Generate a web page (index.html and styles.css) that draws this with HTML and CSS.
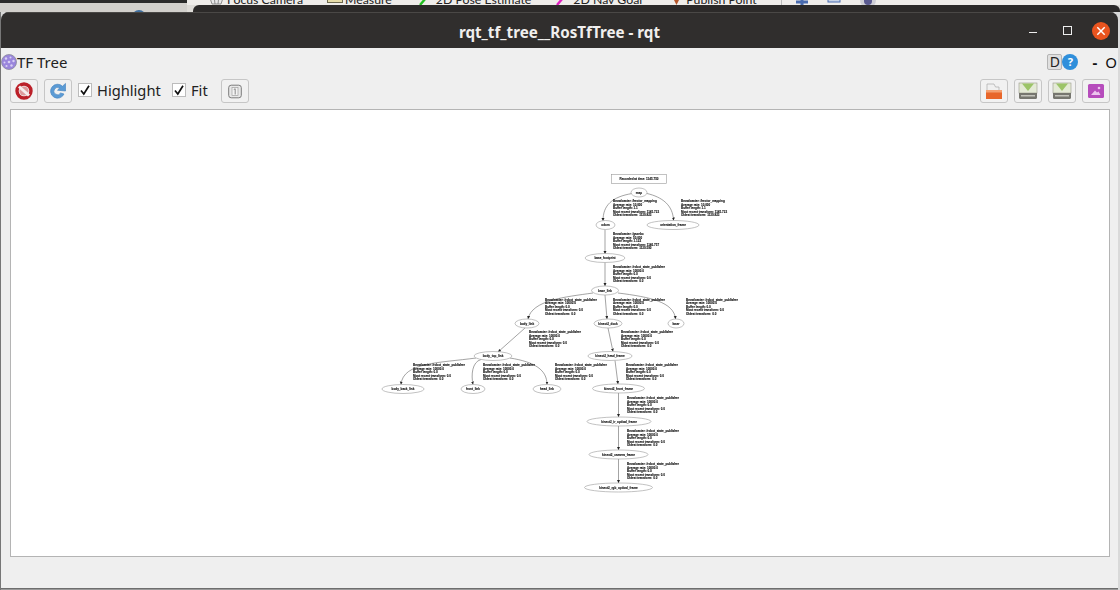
FILE: index.html
```html
<!DOCTYPE html>
<html lang="en">
<head>
    <meta charset="utf-8"/>
    <title>rqt_tf_tree__RosTfTree - rqt</title>
    <link rel="stylesheet" href="styles.css">
</head>
<body>

<!-- what shows of the desktop above the window -->
<div class="desktop_strip">
    <div class="desktop_strip__left">
        <div class="desktop_strip__dot"></div>
    </div>
    <div class="desktop_strip__right">
        <div class="rviz_tools">
            <div class="rviz_tool rviz_tool--camera">
                <svg width="17" height="14" viewBox="0 0 17 14"><path d="M1 3 H16 L13 12 H4 Z M6 3 L7 12 M11 3 L10 12 M2 7 H15" fill="#e8e8e8" stroke="#777" stroke-width="0.8"/></svg>
                <span>Focus Camera</span>
            </div>
            <div class="rviz_tool rviz_tool--measure">
                <svg width="16" height="14" viewBox="0 0 16 14"><rect x="0.5" y="3" width="15" height="7.5" fill="#e6dca8" stroke="#6e6a50"/></svg>
                <span>Measure</span>
            </div>
            <div class="rviz_tool rviz_tool--pose">
                <svg width="15" height="14" viewBox="0 0 15 14"><path d="M1 13 L12 0" stroke="#22c020" stroke-width="2.4"/></svg>
                <span>2D Pose Estimate</span>
            </div>
            <div class="rviz_tool rviz_tool--nav">
                <svg width="15" height="14" viewBox="0 0 15 14"><path d="M1 13 L12 0" stroke="#e020c0" stroke-width="2.4"/></svg>
                <span>2D Nav Goal</span>
            </div>
            <div class="rviz_tool rviz_tool--point">
                <svg width="14" height="14" viewBox="0 0 14 14"><path d="M2 4 H11 L6.5 13 Z" fill="#b5562a"/></svg>
                <span>Publish Point</span>
            </div>
            <div class="rviz_tools__sep"></div>
            <svg class="rviz_icon rviz_icon--first" width="16" height="14" viewBox="0 0 16 14"><path d="M8 0 V8 M2 2 H14" stroke="#4a6cb0" stroke-width="3"/></svg>
            <svg class="rviz_icon" width="16" height="14" viewBox="0 0 16 14"><rect x="1" y="-4" width="12" height="6" fill="#c8d4e8" stroke="#4a6cb0"/></svg>
            <svg class="rviz_icon" width="16" height="14" viewBox="0 0 16 14"><circle cx="8" cy="0" r="8" fill="#cfcfd6"/><circle cx="8" cy="1" r="4" fill="#5a5a90"/></svg>
        </div>
        <div class="behind_window"></div>
    </div>
</div>

<div class="window">
    <div class="titlebar">
        <div class="titlebar__title">rqt_tf_tree__RosTfTree - rqt</div>
        <div class="titlebar__controls">
            <div class="win_min"></div>
            <div class="win_max"></div>
            <div class="win_close">
                <svg width="18" height="18" viewBox="0 0 18 18"><path d="M5.3 5.3 L12.7 12.7 M12.7 5.3 L5.3 12.7" stroke="#fff" stroke-width="1.5"/></svg>
            </div>
        </div>
    </div>

    <div class="plugin">
        <div class="plugin_head">
            <svg class="plugin_head__logo" width="16" height="16" viewBox="0 0 16 16">
                <circle cx="8" cy="8" r="7.5" fill="#9a86dc" stroke="#8a8a9a" stroke-width="0.8"/>
                <g fill="#d8d0f4">
                    <circle cx="5" cy="4.5" r="1.2"/><circle cx="9.5" cy="3.5" r="1"/><circle cx="12.5" cy="7" r="1.2"/>
                    <circle cx="3.5" cy="8.5" r="1"/><circle cx="8" cy="8" r="1.3"/><circle cx="5.5" cy="12" r="1.1"/>
                    <circle cx="10.5" cy="11.5" r="1.2"/>
                </g>
            </svg>
            <span class="plugin_head__name">TF Tree</span>
            <div class="plugin_head__right">
                <div class="d_box">D</div>
                <div class="help_dot">?</div>
                <span class="plugin_head__dash">-</span>
                <span class="plugin_head__o">O</span>
            </div>
        </div>

        <div class="controls">
            <button class="tool_button">
                <svg width="18" height="18" viewBox="0 0 18 18">
                    <circle cx="9" cy="9" r="7" fill="none" stroke="#bb2029" stroke-width="3.4"/>
                    <circle cx="9" cy="9" r="4.6" fill="#dd9a9c"/>
                    <path d="M4 4.5 L14 13.5" stroke="#f6eeee" stroke-width="3"/>
                </svg>
            </button>
            <button class="tool_button">
                <svg width="20" height="20" viewBox="0 0 20 20">
                    <path d="M14.5 5.2 A7 7 0 1 0 16 13 L12.6 12 A3.6 3.6 0 1 1 11.6 7.2 L9.5 9.2 L17.5 10 L17.5 2.4 Z" fill="#5b9bd5" stroke="#3f7fbd" stroke-width="0.6"/>
                </svg>
            </button>
            <label class="check check--highlight"><span class="check__box"><svg width="12" height="12" viewBox="0 0 12 12"><path d="M2 6.5 L4.8 10 L10 1.8" fill="none" stroke="#111" stroke-width="1.7"/></svg></span>Highlight</label>
            <label class="check check--fit"><span class="check__box"><svg width="12" height="12" viewBox="0 0 12 12"><path d="M2 6.5 L4.8 10 L10 1.8" fill="none" stroke="#111" stroke-width="1.7"/></svg></span>Fit</label>
            <button class="tool_button">
                <svg width="14" height="15" viewBox="0 0 14 15">
                    <rect x="0.7" y="1.2" width="12.6" height="12.6" rx="2.5" fill="#e8e8e8" stroke="#7c7c7c" stroke-width="1"/>
                    <rect x="4" y="3.5" width="6" height="8" fill="#f4f4f4" stroke="#a0a0a0" stroke-width="0.7"/>
                    <path d="M5.8 5.5 L7.2 4.8 V10.5" fill="none" stroke="#888" stroke-width="1"/>
                </svg>
            </button>

            <div class="controls__right">
                <button class="tool_button">
                    <svg width="20" height="18" viewBox="0 0 20 18">
                        <path d="M3 15 V2 H10 L11.5 5 H15 V15 Z" fill="#f0f0f0" stroke="#aaa" stroke-width="0.7"/>
                        <path d="M2 8 H18 V17 H2 Z" fill="#e8662a"/>
                        <path d="M2 8 H18 V10.5 H2 Z" fill="#f4a070"/>
                    </svg>
                </button>
                <button class="tool_button">
                    <svg width="20" height="18" viewBox="0 0 20 18">
                        <rect x="1" y="1" width="18" height="10" fill="#e4ead6" stroke="#9a9a8a" stroke-width="0.6"/>
                        <path d="M4 1.5 H16 L10 9 Z" fill="#9cc468"/>
                        <path d="M1 11 H19 V16 A1.5 1.5 0 0 1 17.5 17 H2.5 A1.5 1.5 0 0 1 1 16 Z" fill="#76766f"/>
                        <rect x="3" y="13" width="14" height="1.5" fill="#c4c4bc"/>
                    </svg>
                </button>
                <button class="tool_button">
                    <svg width="20" height="18" viewBox="0 0 20 18">
                        <rect x="1" y="1" width="18" height="10" fill="#e4ead6" stroke="#9a9a8a" stroke-width="0.6"/>
                        <path d="M4 1.5 H16 L10 9 Z" fill="#9cc468"/>
                        <path d="M1 11 H19 V16 A1.5 1.5 0 0 1 17.5 17 H2.5 A1.5 1.5 0 0 1 1 16 Z" fill="#76766f"/>
                        <rect x="3" y="13" width="14" height="1.5" fill="#c4c4bc"/>
                    </svg>
                </button>
                <button class="tool_button">
                    <svg width="18" height="18" viewBox="0 0 18 18">
                        <rect x="1" y="2" width="16" height="14" rx="1.5" fill="#b64cbc"/>
                        <path d="M4 13 L8 8.5 L10 10.5 L11.5 9.5 L13.5 13 Z" fill="#ecc4ee"/>
                        <circle cx="12" cy="6" r="1.3" fill="#ecc4ee"/>
                    </svg>
                </button>
            </div>
        </div>

        <div class="graph_view">
            <!-- viewBox keeps the graph in window coordinates -->
            <svg class="graph" width="1098" height="446" viewBox="11 110 1098 446">
                <defs>
                    <marker id="arrow" markerWidth="4" markerHeight="4" refX="3" refY="1.5" orient="auto" markerUnits="userSpaceOnUse">
                        <path d="M0 0 L3 1.5 L0 3 Z" fill="#222"/>
                    </marker>
                </defs>

                <g class="edges">
                    <path marker-end="url(#arrow)" d="M632 193.5 C612 197 603 205 603 221"/>
                    <path marker-end="url(#arrow)" d="M647 193.5 C662 197 673 205 673.5 220.5"/>
                    <path marker-end="url(#arrow)" d="M605 229.5 L605 254"/>
                    <path marker-end="url(#arrow)" d="M605 262.5 L605 286"/>
                    <path marker-end="url(#arrow)" d="M593 293 C565 297 532 300 528 319"/>
                    <path marker-end="url(#arrow)" d="M605 295 L607 319"/>
                    <path marker-end="url(#arrow)" d="M618 293 C650 297 674 302 675.5 319"/>
                    <path marker-end="url(#arrow)" d="M525 328 L498 352"/>
                    <path marker-end="url(#arrow)" d="M608 328 L613 351.5"/>
                    <path marker-end="url(#arrow)" d="M615 360.5 L618 384"/>
                    <path marker-end="url(#arrow)" d="M476 358 C440 363 403 362 401 384.5"/>
                    <path marker-end="url(#arrow)" d="M481 359.5 C472 362 471 375 473 384.5"/>
                    <path marker-end="url(#arrow)" d="M510 358 C535 362 547 370 547 384.5"/>
                    <path marker-end="url(#arrow)" d="M618.5 393 L618.5 417"/>
                    <path marker-end="url(#arrow)" d="M618.5 426 L618.5 450"/>
                    <path marker-end="url(#arrow)" d="M618.5 459 L618.5 483"/>
                </g>

                <rect class="stamp" x="611.5" y="174.5" width="55" height="9"/>
                <text class="node_label" x="639" y="179.6">Recorded at time: 1145.750</text>

                <g class="nodes">
                    <ellipse cx="639" cy="192.5" rx="8" ry="4.5"/>
                    <ellipse cx="605.5" cy="225" rx="9.5" ry="4.5"/>
                    <ellipse cx="673" cy="225" rx="26" ry="4.5"/>
                    <ellipse cx="605" cy="258" rx="20" ry="4.5"/>
                    <ellipse cx="605" cy="290.5" rx="13.5" ry="4.5"/>
                    <ellipse cx="527" cy="323.5" rx="12" ry="4.5"/>
                    <ellipse cx="608" cy="323.5" rx="14" ry="4.5"/>
                    <ellipse cx="676" cy="323.5" rx="8" ry="4.5"/>
                    <ellipse cx="493" cy="356" rx="19" ry="4.5"/>
                    <ellipse cx="610" cy="356" rx="22" ry="4.5"/>
                    <ellipse cx="403" cy="389" rx="21" ry="4.5"/>
                    <ellipse cx="473" cy="389" rx="12" ry="4.5"/>
                    <ellipse cx="547" cy="389" rx="14" ry="4.5"/>
                    <ellipse cx="618.5" cy="388.5" rx="26" ry="4.5"/>
                    <ellipse cx="619" cy="421.5" rx="32" ry="4.5"/>
                    <ellipse cx="618.5" cy="454.5" rx="29.5" ry="4.5"/>
                    <ellipse cx="618.5" cy="487.5" rx="34" ry="4.5"/>
                </g>

                <g class="node_names">
                    <text class="node_label" x="639" y="193.6">map</text>
                    <text class="node_label" x="605.5" y="226.1">odom</text>
                    <text class="node_label" x="673" y="226.1">orientation_frame</text>
                    <text class="node_label" x="605" y="259.1">base_footprint</text>
                    <text class="node_label" x="605" y="291.6">base_link</text>
                    <text class="node_label" x="527" y="324.6">body_link</text>
                    <text class="node_label" x="608" y="324.6">kinect2_dock</text>
                    <text class="node_label" x="676" y="324.6">laser</text>
                    <text class="node_label" x="493" y="357.1">body_top_link</text>
                    <text class="node_label" x="610" y="357.1">kinect2_head_frame</text>
                    <text class="node_label" x="403" y="390.1">body_back_link</text>
                    <text class="node_label" x="473" y="390.1">front_link</text>
                    <text class="node_label" x="547" y="390.1">head_link</text>
                    <text class="node_label" x="618.5" y="389.6">kinect2_front_frame</text>
                    <text class="node_label" x="619" y="422.6">kinect2_ir_optical_frame</text>
                    <text class="node_label" x="618.5" y="455.6">kinect2_camera_frame</text>
                    <text class="node_label" x="618.5" y="488.6">kinect2_rgb_optical_frame</text>
                </g>

                <g class="edge_labels">
                    <text y="202"><tspan x="613">Broadcaster: /hector_mapping</tspan><tspan x="613" dy="3.6">Average rate: 10.000</tspan><tspan x="613" dy="3.6">Buffer length: 1.1</tspan><tspan x="613" dy="3.6">Most recent transform: 1145.723</tspan><tspan x="613" dy="3.6">Oldest transform: 1139.823</tspan></text>
                    <text y="202"><tspan x="681">Broadcaster: /hector_mapping</tspan><tspan x="681" dy="3.6">Average rate: 10.000</tspan><tspan x="681" dy="3.6">Buffer length: 1.1</tspan><tspan x="681" dy="3.6">Most recent transform: 1145.723</tspan><tspan x="681" dy="3.6">Oldest transform: 1139.823</tspan></text>
                    <text y="235"><tspan x="613">Broadcaster: /gazebo</tspan><tspan x="613" dy="3.6">Average rate: 50.000</tspan><tspan x="613" dy="3.6">Buffer length: 1.122</tspan><tspan x="613" dy="3.6">Most recent transform: 1146.757</tspan><tspan x="613" dy="3.6">Oldest transform: 1139.590</tspan></text>
                    <text y="268"><tspan x="613">Broadcaster: /robot_state_publisher</tspan><tspan x="613" dy="3.6">Average rate: 10000.0</tspan><tspan x="613" dy="3.6">Buffer length: 0.0</tspan><tspan x="613" dy="3.6">Most recent transform: 0.0</tspan><tspan x="613" dy="3.6">Oldest transform: 0.0</tspan></text>
                    <text y="300.5"><tspan x="545">Broadcaster: /robot_state_publisher</tspan><tspan x="545" dy="3.6">Average rate: 10000.0</tspan><tspan x="545" dy="3.6">Buffer length: 0.0</tspan><tspan x="545" dy="3.6">Most recent transform: 0.0</tspan><tspan x="545" dy="3.6">Oldest transform: 0.0</tspan></text>
                    <text y="300.5"><tspan x="613">Broadcaster: /robot_state_publisher</tspan><tspan x="613" dy="3.6">Average rate: 10000.0</tspan><tspan x="613" dy="3.6">Buffer length: 0.0</tspan><tspan x="613" dy="3.6">Most recent transform: 0.0</tspan><tspan x="613" dy="3.6">Oldest transform: 0.0</tspan></text>
                    <text y="300.5"><tspan x="686">Broadcaster: /robot_state_publisher</tspan><tspan x="686" dy="3.6">Average rate: 10000.0</tspan><tspan x="686" dy="3.6">Buffer length: 0.0</tspan><tspan x="686" dy="3.6">Most recent transform: 0.0</tspan><tspan x="686" dy="3.6">Oldest transform: 0.0</tspan></text>
                    <text y="333"><tspan x="529">Broadcaster: /robot_state_publisher</tspan><tspan x="529" dy="3.6">Average rate: 10000.0</tspan><tspan x="529" dy="3.6">Buffer length: 0.0</tspan><tspan x="529" dy="3.6">Most recent transform: 0.0</tspan><tspan x="529" dy="3.6">Oldest transform: 0.0</tspan></text>
                    <text y="333"><tspan x="621">Broadcaster: /robot_state_publisher</tspan><tspan x="621" dy="3.6">Average rate: 10000.0</tspan><tspan x="621" dy="3.6">Buffer length: 0.0</tspan><tspan x="621" dy="3.6">Most recent transform: 0.0</tspan><tspan x="621" dy="3.6">Oldest transform: 0.0</tspan></text>
                    <text y="366"><tspan x="413">Broadcaster: /robot_state_publisher</tspan><tspan x="413" dy="3.6">Average rate: 10000.0</tspan><tspan x="413" dy="3.6">Buffer length: 0.0</tspan><tspan x="413" dy="3.6">Most recent transform: 0.0</tspan><tspan x="413" dy="3.6">Oldest transform: 0.0</tspan></text>
                    <text y="366"><tspan x="483">Broadcaster: /robot_state_publisher</tspan><tspan x="483" dy="3.6">Average rate: 10000.0</tspan><tspan x="483" dy="3.6">Buffer length: 0.0</tspan><tspan x="483" dy="3.6">Most recent transform: 0.0</tspan><tspan x="483" dy="3.6">Oldest transform: 0.0</tspan></text>
                    <text y="366"><tspan x="555">Broadcaster: /robot_state_publisher</tspan><tspan x="555" dy="3.6">Average rate: 10000.0</tspan><tspan x="555" dy="3.6">Buffer length: 0.0</tspan><tspan x="555" dy="3.6">Most recent transform: 0.0</tspan><tspan x="555" dy="3.6">Oldest transform: 0.0</tspan></text>
                    <text y="366"><tspan x="626">Broadcaster: /robot_state_publisher</tspan><tspan x="626" dy="3.6">Average rate: 10000.0</tspan><tspan x="626" dy="3.6">Buffer length: 0.0</tspan><tspan x="626" dy="3.6">Most recent transform: 0.0</tspan><tspan x="626" dy="3.6">Oldest transform: 0.0</tspan></text>
                    <text y="399"><tspan x="627">Broadcaster: /robot_state_publisher</tspan><tspan x="627" dy="3.6">Average rate: 10000.0</tspan><tspan x="627" dy="3.6">Buffer length: 0.0</tspan><tspan x="627" dy="3.6">Most recent transform: 0.0</tspan><tspan x="627" dy="3.6">Oldest transform: 0.0</tspan></text>
                    <text y="432"><tspan x="627">Broadcaster: /robot_state_publisher</tspan><tspan x="627" dy="3.6">Average rate: 10000.0</tspan><tspan x="627" dy="3.6">Buffer length: 0.0</tspan><tspan x="627" dy="3.6">Most recent transform: 0.0</tspan><tspan x="627" dy="3.6">Oldest transform: 0.0</tspan></text>
                    <text y="465"><tspan x="627">Broadcaster: /robot_state_publisher</tspan><tspan x="627" dy="3.6">Average rate: 10000.0</tspan><tspan x="627" dy="3.6">Buffer length: 0.0</tspan><tspan x="627" dy="3.6">Most recent transform: 0.0</tspan><tspan x="627" dy="3.6">Oldest transform: 0.0</tspan></text>
                </g>
            </svg>
        </div>

        <div class="status_area"></div>
    </div>
</div>

</body>
</html>
```

FILE: styles.css
```css
html {
    height: 100%;
}

body {
    margin: 0;
    width: 1120px;
    height: 590px;
    overflow: hidden;
    background: linear-gradient(to right, #777 0 1px, #d9d9d9 1px);
    font-family: "Noto Sans", "Open Sans", sans-serif;
    color: #2a2a2a;
}

/* desktop behind the window */
.desktop_strip {
    display: flex;
    height: 12px;
}

.desktop_strip__left {
    width: 187px;
    box-sizing: border-box;
    border-top: 3px solid #2b2b2b;
    padding-left: 132px;
    background-color: #d2d0cc;
    overflow: hidden;
}

.desktop_strip__dot {
    width: 14px;
    height: 14px;
    margin-top: 7px;
    border-radius: 50%;
    background-color: #3f6f9f;
}

.desktop_strip__right {
    flex: 1;
    display: flex;
    flex-direction: column;
    background-color: #dedcd8;
}

.rviz_tools {
    display: flex;
    align-items: flex-end;
    height: 5px;
    overflow: hidden;
    background-color: #efedea;
}

.rviz_tool {
    display: flex;
    align-items: flex-end;
    flex: none;
    gap: 2px;
    height: 14px;
    margin-bottom: -1px;
    font-family: "Lato", "Noto Sans", sans-serif;
    font-size: 12.3px;
    line-height: 14px;
    color: #222;
}

.rviz_tool span {
    margin-bottom: -1px;
}

.rviz_tool svg {
    flex: none;
}

.rviz_tool--camera { margin-left: 21px; }
.rviz_tool--measure { margin-left: 24px; }
.rviz_tool--pose { margin-left: 27px; }
.rviz_tool--nav { margin-left: 25px; }
.rviz_tool--point { margin-left: 28px; }

.rviz_tools__sep {
    flex: none;
    width: 1px;
    height: 5px;
    margin-left: 24px;
    background-color: #bbb;
}

.rviz_icon {
    flex: none;
    margin-left: 17px;
    align-self: flex-start;
}

.rviz_icon--first {
    margin-left: 12px;
}

.behind_window {
    flex: 1;
    margin-left: 6px;
    border-radius: 6px 6px 0 0;
    background-color: #2c2a29;
}

/* the rqt window */
.window {
    display: flex;
    flex-direction: column;
    height: 576px;
    margin: 0 2px 0 1px;
    border-radius: 8px 8px 0 0;
    overflow: hidden;
    box-shadow: 0 1px 0 #6e6e6e, 0 2px 0 #9a9a9a;
}

.titlebar {
    display: flex;
    flex: none;
    align-items: center;
    justify-content: center;
    position: relative;
    height: 36px;
    background-color: #302e2d;
    border-top: 1px solid #4a4846;
    box-sizing: border-box;
}

.titlebar__title {
    font-size: 15.2px;
    font-weight: 700;
    color: #f0efee;
    margin-left: 0;
    margin-top: 2px;
}

.titlebar__controls {
    display: flex;
    align-items: center;
    position: absolute;
    right: 0;
    top: 0;
    bottom: 0;
}

.win_min {
    width: 8px;
    height: 1.5px;
    margin-top: 4px;
    background-color: #eee;
}

.win_max {
    width: 7px;
    height: 7px;
    margin-left: 26px;
    border: 1px solid #eee;
}

.win_close {
    display: flex;
    width: 18px;
    height: 18px;
    margin-left: 20px;
    margin-right: 8px;
    border-radius: 50%;
    background-color: #e9541f;
}

.plugin {
    display: flex;
    flex: 1;
    flex-direction: column;
    background-color: #efefef;
}

.plugin_head {
    display: flex;
    flex: none;
    align-items: center;
    height: 31px;
    padding-bottom: 3px;
    box-sizing: border-box;
}

.plugin_head__logo {
    flex: none;
}

.plugin_head__name {
    font-size: 15px;
    color: #222;
}

.plugin_head__right {
    display: flex;
    align-items: center;
    margin-left: auto;
}

.d_box {
    width: 13px;
    height: 14px;
    border: 1px solid #b4b4b4;
    border-radius: 2px;
    background-color: #e0e0e0;
    font-size: 14px;
    line-height: 14px;
    text-align: center;
    color: #222;
}

.help_dot {
    width: 16px;
    height: 16px;
    border-radius: 50%;
    background-color: #2f8fdb;
    color: #fff;
    font-size: 11px;
    font-weight: 700;
    line-height: 16px;
    text-align: center;
}

.plugin_head__dash {
    margin-left: 14px;
    font-size: 15px;
    font-weight: 700;
    color: #111;
}

.plugin_head__o {
    margin-left: 8px;
    margin-right: 1px;
    font-size: 15px;
    color: #111;
}

.controls {
    display: flex;
    flex: none;
    align-items: center;
    height: 24px;
    padding: 0 8px 0 9px;
}

.tool_button {
    display: flex;
    flex: none;
    align-items: center;
    justify-content: center;
    width: 28px;
    height: 24px;
    padding: 0;
    margin-right: 6px;
    border: 1px solid #c6c6c6;
    border-radius: 3px;
    background-color: #f1f1f1;
}

.check {
    display: flex;
    flex: none;
    align-items: center;
    margin-top: -2px;
    font-size: 14.7px;
    color: #222;
}

.check__box {
    display: flex;
    align-items: center;
    justify-content: center;
    width: 12px;
    height: 12px;
    margin-right: 5px;
    border: 1px solid #bcbcbc;
    background-color: #fff;
}

.check--highlight {
    width: 94px;
}

.check--fit {
    width: 49px;
}

.controls__right {
    display: flex;
    margin-left: auto;
}

.controls__right .tool_button:last-child {
    margin-right: 0;
}

.graph_view {
    flex: none;
    height: 448px;
    margin: 6px 8px 0 9px;
    border: 1px solid #b4b4b4;
    background-color: #fff;
    box-sizing: border-box;
    overflow: hidden;
}

/* the graph is a scaled down image in the original, so soften it a little */
.graph {
    display: block;
    filter: blur(0.3px);
}

.edges path {
    fill: none;
    stroke: #666;
    stroke-width: 0.6;
}

.stamp {
    fill: #fff;
    stroke: #999;
    stroke-width: 0.6;
}

.nodes ellipse {
    fill: #fff;
    stroke: #999;
    stroke-width: 0.6;
}

.node_label {
    font-family: "Liberation Sans", sans-serif;
    font-size: 3.05px;
    font-weight: 700;
    text-anchor: middle;
    fill: #111;
    stroke: #111;
    stroke-width: 0.1;
}

.edge_labels text {
    font-family: "Liberation Sans", sans-serif;
    font-size: 3.02px;
    font-weight: 700;
    fill: #111;
    stroke: #111;
    stroke-width: 0.1;
}

.status_area {
    flex: 1;
}
```
